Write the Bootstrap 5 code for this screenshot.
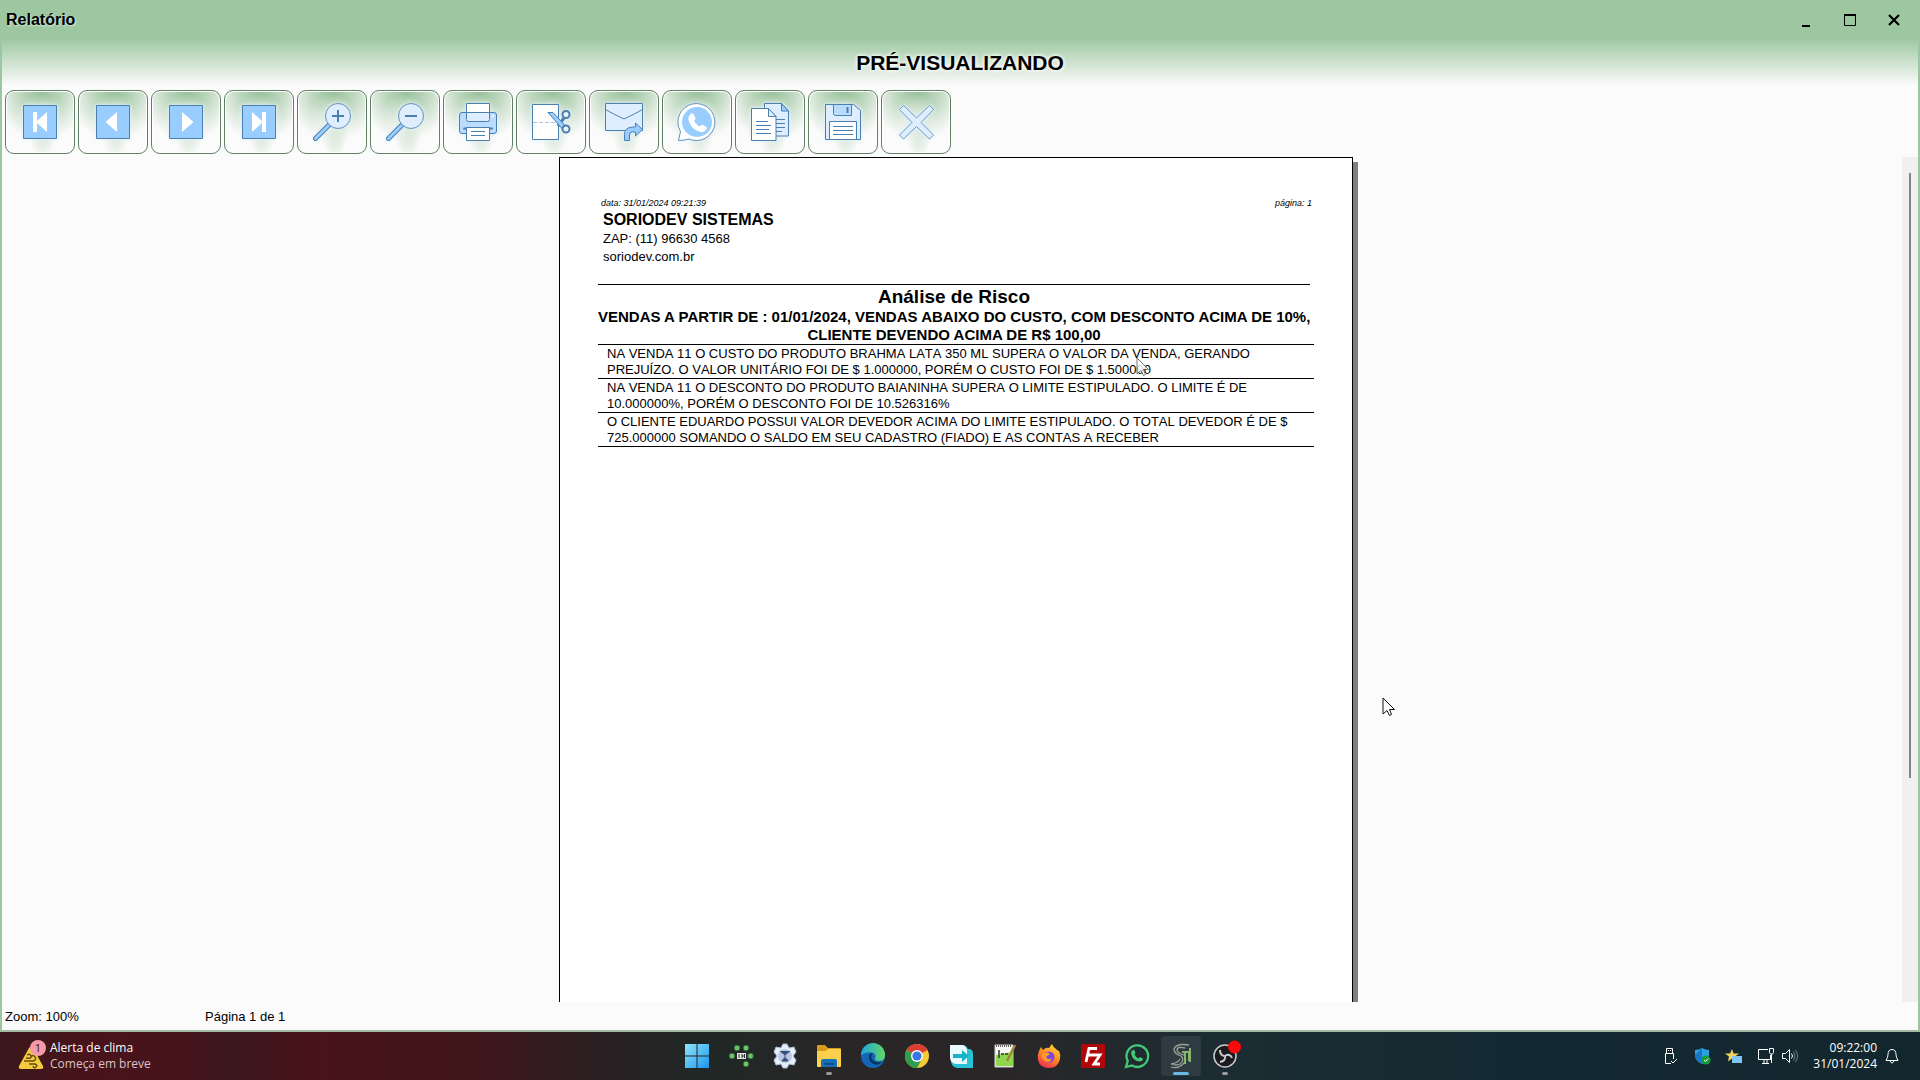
<!DOCTYPE html>
<html lang="pt-BR">
<head>
<meta charset="utf-8">
<meta name="viewport" content="width=device-width, initial-scale=1">
<title>Relatório</title>
<link href="https://cdn.jsdelivr.net/npm/bootstrap@5.3.0/dist/css/bootstrap.min.css" rel="stylesheet">
<style>
  body { font-family: "Liberation Sans", Arial, sans-serif; color: #000; background: #fbfbfb; }
  .app-window { border: 2px solid #9dc7a0; border-top: 0; border-bottom-color: #a3bba4; background: #fbfbfb linear-gradient(#9dc7a0 0, #9dc7a0 38px, #fbfbfb 86px) no-repeat; }
  .title-bar { height: 38px; padding-left: 4px; padding-right: 2px; }
  .title-name { font-size: 16px; line-height: 40px; font-weight: 700; text-shadow: 1px 1px 2px #dcebdc; }
  .win-btn { width: 44px; height: 38px; border: 0; background: none; padding: 0; }
  .preview-title { font-size: 21px; line-height: 50px; font-weight: 700; text-shadow: 0 0 4px #fff, 0 0 4px #fff; }
  .tool-strip { gap: 3px; padding: 2px 3px 3px; }
  .tool-btn { width: 70px; height: 64px; padding: 0; border: 1px solid #5f8062; border-radius: 9px; box-shadow: inset 0 0 0 1px #fff;
    background: radial-gradient(ellipse 26px 30px at 50% 52%, rgba(251,251,251,.5) 30%, rgba(251,251,251,0) 100%), radial-gradient(ellipse 14px 30px at 54% 60%, #bcd8bd, rgba(207,227,207,0)), radial-gradient(ellipse 46px 50px at 52% 0, #94c097 0, #bdd7be 45%, #fbfbfb 100%); }
  .tool-btn svg { width: 40px; height: 40px; display: block; margin: 0 auto; filter: drop-shadow(0 0 2px #e4f2ff); }
  .viewer { min-height: 0; }
  .canvas-area { padding-left: 8px; }
  .sheet { width: 794px; min-height: 1123px; background: #fff; border: 1px solid #000; box-shadow: 5px 5px 0 #808080; padding: 39px 38px 38px; }
  .sheet-meta { font-size: 9px; line-height: 13px; font-style: italic; padding: 0 2px 0 3px; }
  .company { padding-left: 5px; margin-bottom: 18px; font-size: 13px; line-height: 18px; }
  .company-name { font-size: 16px; line-height: 20px; font-weight: 700; margin: 0; }
  .report-head { border-top: 1px solid #000; margin-right: 4px; text-align: center; }
  .report-head h2 { font-size: 19px; line-height: 23px; font-weight: 700; margin: 0; }
  .report-head p { font-size: 15px; line-height: 18px; font-weight: 700; margin: 0; white-space: nowrap; }
  .risk-list { border-bottom: 1px solid #000; }
  .risk-list li { border-top: 1px solid #000; padding: 1px 0 0 9px; font-size: 13px; line-height: 16px; font-kerning: none; white-space: nowrap; }
  .scroll-track { width: 16px; background: #f0f0f0; padding: 16px 0 0 7px; }
  .scroll-thumb { width: 2px; height: 73%; background: #858585; }
  .status-strip { height: 28px; font-size: 13px; line-height: 30px; padding-left: 3px; }
  .status-zoom { width: 200px; }
  .task-strip { height: 48px; font-family: "Open Sans", "Noto Sans", sans-serif; font-size: 12px; line-height: 16px; color: #fff;
    background: linear-gradient(90deg, #3b181c 0, #49131b 90px, #47141c 180px, #3c181d 230px, #49131b 310px, #40171c 480px, #2a2023 600px, #202826 700px, #292627 850px, #2a2627 1000px, #1c2c32 1200px, #142a32 1500px, #12262e 100%); }
  .side-cell { flex: 1 1 0; }
  .weather { padding-left: 17px; gap: 3px; }
  .weather small { font-size: 12px; color: #d9c3c6; }
  .app-link { width: 44px; height: 48px; position: relative; }
  .app-link svg { width: 26px; height: 26px; overflow: visible; }
  .app-link.running::after { content: ""; position: absolute; bottom: 5px; left: 19px; width: 6px; height: 3px; border-radius: 2px; background: #9a9a9a; }
  .app-link.active::before { content: ""; position: absolute; inset: 4px 2px; border-radius: 4px; background: rgba(255,255,255,.08); }
  .app-link.active::after { left: 14px; width: 16px; background: #6cb9e6; }
  .tray { padding-right: 16px; }
  .tray-item { width: 32px; }
  .tray-item.slim { width: 16px; }
  .tray svg { width: 16px; height: 16px; overflow: visible; }
  .clock { width: 79px; }
  .bell { width: 24px; margin-left: 3px; }
  .pointer { position: absolute; width: 14px; height: 20px; }
  .pointer-main { left: 1382px; top: 697px; }
  .pointer-ghost { left: 1136px; top: 357px; opacity: .8; }
</style>
<script src="https://cdn.jsdelivr.net/npm/bootstrap@5.3.0/dist/js/bootstrap.bundle.min.js"></script>
</head>
<body class="vh-100 d-flex flex-column overflow-hidden position-relative">
<main class="app-window flex-grow-1 d-flex flex-column overflow-hidden">
  <header>
    <div class="title-bar d-flex justify-content-between">
      <span class="title-name">Relatório</span>
      <div class="d-flex">
        <button class="win-btn" aria-label="Minimizar"><svg width="14" height="14"><path d="M3 13h8" stroke="#000" stroke-width="2"/></svg></button>
        <button class="win-btn" aria-label="Maximizar"><svg width="14" height="14"><path d="M1.500 2.500h11v10h-11z" fill="none" stroke="#000"/><path d="M1 2h12" stroke="#000" stroke-width="2"/></svg></button>
        <button class="win-btn" aria-label="Fechar"><svg width="14" height="14"><path d="M2 2l10 10M12 2L2 12" stroke="#000" stroke-width="2.200"/></svg></button>
      </div>
    </div>
    <h1 class="preview-title text-center m-0">PRÉ-VISUALIZANDO</h1>
  </header>
  <nav class="tool-strip d-flex" aria-label="Ferramentas">
    <button class="tool-btn" aria-label="Primeira"><svg viewBox="0 0 40 40"><path d="M3.500 3.500h33v33h-33z" fill="#99ccff" stroke="#4a7fae"/><path d="M13 10h4v9l10-9v20l-10-9v9h-4z" fill="#fff"/></svg></button>
    <button class="tool-btn" aria-label="Anterior"><svg viewBox="0 0 40 40"><path d="M3.500 3.500h33v33h-33z" fill="#99ccff" stroke="#4a7fae"/><path d="M24 10v20L12.500 20z" fill="#fff"/></svg></button>
    <button class="tool-btn" aria-label="Próxima"><svg viewBox="0 0 40 40"><path d="M3.500 3.500h33v33h-33z" fill="#99ccff" stroke="#4a7fae"/><path d="M16 10v20l11.500-10z" fill="#fff"/></svg></button>
    <button class="tool-btn" aria-label="Última"><svg viewBox="0 0 40 40"><path d="M3.500 3.500h33v33h-33z" fill="#99ccff" stroke="#4a7fae"/><path d="M27 10h-4v9l-10-9v20l10-9v9h4z" fill="#fff"/></svg></button>
    <button class="tool-btn" aria-label="Aumentar zoom"><svg viewBox="0 0 40 40"><path d="M17.500 22.500L3.500 36.500" stroke="#4a7fae" stroke-width="5" stroke-linecap="round"/><path d="M17.500 22.500L3.500 36.500" stroke="#99ccff" stroke-width="3" stroke-linecap="round"/><circle cx="26" cy="14" r="12.500" fill="#deeeff" stroke="#6590b5"/><path d="M20 14h12M26 8v12" stroke="#4a7fae" stroke-width="2"/></svg></button>
    <button class="tool-btn" aria-label="Diminuir zoom"><svg viewBox="0 0 40 40"><path d="M17.500 22.500L3.500 36.500" stroke="#4a7fae" stroke-width="5" stroke-linecap="round"/><path d="M17.500 22.500L3.500 36.500" stroke="#99ccff" stroke-width="3" stroke-linecap="round"/><circle cx="26" cy="14" r="12.500" fill="#deeeff" stroke="#6590b5"/><path d="M20 14h12" stroke="#4a7fae" stroke-width="2"/></svg></button>
    <button class="tool-btn" aria-label="Imprimir"><svg viewBox="0 0 40 40" stroke="#4a7fae"><rect x="1.500" y="10.500" width="37" height="21" rx="2.500" fill="#b9dcff"/><path d="M8.500 1.500h23v15h-23z" fill="#fff"/><path d="M8.500 10.500h23v7q0 2-2 2h-19q-2 0-2-2z" fill="#deeeff"/><path d="M6 26.500h28" stroke-width="2" stroke-linecap="round"/><path d="M8.500 25.500h23v13h-23z" fill="#fff"/><path d="M13 29.500h14M13 33.500h14"/><circle cx="35" cy="14" r="1" fill="#fff" stroke="none"/></svg></button>
    <button class="tool-btn" aria-label="Recortar"><svg viewBox="0 0 40 40" stroke="#4a7fae" fill="none"><path d="M1.500 2.500h26v35h-26z" fill="#fff"/><path d="M2 20.500h26" stroke-dasharray="4 2" stroke="#a9c4d8"/><path d="M27 24l6-8" stroke-width="3"/><circle cx="35" cy="12.500" r="3.500" stroke-width="2" fill="#e8f4ff"/><path d="M17 10.500h5l12 13-3 3z" fill="#99ccff"/><circle cx="35" cy="27" r="3.500" stroke-width="2" fill="#e8f4ff"/></svg></button>
    <button class="tool-btn" aria-label="Enviar e-mail"><svg viewBox="0 0 40 40" stroke="#4a7fae"><path d="M1.500 1.500h37v27h-37z" fill="#deeeff"/><path d="M1.500 7.500q5 3 18.500 9.500 13.500-6.500 18.500-9.500" fill="none"/><path d="M20.500 38.500v-6q0-7 8-7.500h3v-4l7 6.500-7 6.500v-4h-3q-3 0-3 3v5.500z" fill="#99ccff"/></svg></button>
    <button class="tool-btn" aria-label="WhatsApp"><svg viewBox="0 0 40 40"><path d="M1.500 38.500l2-9A18.500 18.500 0 1 1 12 37q-5 1.500-10.500 1.500z" fill="#fff" stroke="#6590b5"/><circle cx="20" cy="20" r="15" fill="#99ccff"/><path d="M14 11.500q1.500-.8 2.500.5l2 4q.3 1-1.500 3 2 3.500 5.500 5.500 2-2 3-1.700l4 2.200q.8 1-.2 2.500-2 3-6 2.500-9-2-12-12.500 0-4 2.700-6z" fill="#fff"/></svg></button>
    <button class="tool-btn" aria-label="Copiar"><svg viewBox="0 0 40 40" stroke="#4a7fae"><path d="M14.500 1.500h17l7 7.500v25h-24z" fill="#deeeff"/><path d="M31.500 1.500V9h7z" fill="#99ccff"/><path d="M26 17.500h9M26 21.500h9M26 25.500h9M26 29.500h6"/><path d="M1.500 6.500h17l7.500 8v24H1.500z" fill="#fff"/><path d="M18.500 6.500v8H26z" fill="#deeeff"/><path d="M6 19.500h12M6 23.500h15M6 27.500h13M6 31.500h15"/></svg></button>
    <button class="tool-btn" aria-label="Salvar"><svg viewBox="0 0 40 40" stroke="#4a7fae"><path d="M2.500 2.500h28l7 6v29h-35z" fill="#deeeff"/><path d="M10.500 2.500h18v11h-16q-2 0-2-2z" fill="#b9dcff"/><path d="M24.500 5v6" stroke-width="2"/><path d="M6.500 19.500h27v18h-27z" fill="#fff"/><path d="M10 24.500h20M10 28.500h20M10 32.500h20"/></svg></button>
    <button class="tool-btn" aria-label="Fechar visualização"><svg viewBox="0 0 40 40"><path d="M7.500 3.500L20.500 16l13-12.500 4 4L25 20.500l12.500 12.500-4 4L20.500 24.500 7.500 37l-4-4L16 20.500 3.500 7.500z" fill="#deeeff" stroke="#6a9bc8" stroke-linejoin="round"/></svg></button>
  </nav>
  <section class="viewer flex-grow-1 d-flex">
    <div class="canvas-area flex-grow-1 d-flex justify-content-center align-items-start overflow-hidden">
      <article class="sheet">
        <div class="sheet-meta d-flex justify-content-between"><span>data: 31/01/2024 09:21:39</span><span>página: 1</span></div>
        <div class="company">
          <p class="company-name">SORIODEV SISTEMAS</p>
          <div>ZAP: (11) 96630 4568</div>
          <div>soriodev.com.br</div>
        </div>
        <div class="report-head">
          <h2>Análise de Risco</h2>
          <p>VENDAS A PARTIR DE : 01/01/2024, VENDAS ABAIXO DO CUSTO, COM DESCONTO ACIMA DE 10%,<br>CLIENTE DEVENDO ACIMA DE R$ 100,00</p>
        </div>
        <ul class="risk-list list-unstyled m-0">
          <li>NA VENDA 11 O CUSTO DO PRODUTO BRAHMA LATA 350 ML SUPERA O VALOR DA VENDA, GERANDO<br>PREJUÍZO. O VALOR UNITÁRIO FOI DE $ 1.000000, PORÉM O CUSTO FOI DE $ 1.500000</li>
          <li>NA VENDA 11 O DESCONTO DO PRODUTO BAIANINHA SUPERA O LIMITE ESTIPULADO. O LIMITE É DE<br>10.000000%, PORÉM O DESCONTO FOI DE 10.526316%</li>
          <li>O CLIENTE EDUARDO POSSUI VALOR DEVEDOR ACIMA DO LIMITE ESTIPULADO. O TOTAL DEVEDOR É DE $<br>725.000000 SOMANDO O SALDO EM SEU CADASTRO (FIADO) E AS CONTAS A RECEBER</li>
        </ul>
      </article>
    </div>
    <div class="scroll-track"><div class="scroll-thumb"></div></div>
  </section>
  <footer class="status-strip d-flex"><span class="status-zoom">Zoom: 100%</span><span>Página 1 de 1</span></footer>
</main>
<div class="task-strip d-flex flex-shrink-0">
  <div class="side-cell weather d-flex align-items-center">
    <svg width="30" height="34" viewBox="0 0 30 34"><path d="M12 9q2-3 4 0l10 18q1 3-2 3H4q-3 0-2-3z" fill="#f3cb3e"/><path d="M10 16q3-2 4 1t-5 2M7 22h9q4-1 2-4t-4 0M12 25h6q3 1 1 3t-3-1" fill="none" stroke="#6b4c10" stroke-width="1.500"/><circle cx="21" cy="9" r="8" fill="#f59aa6"/><text x="21" y="13" font-size="11" text-anchor="middle" fill="#3a1014">1</text></svg>
    <div>Alerta de clima<br><small>Começa em breve</small></div>
  </div>
  <nav class="d-flex" aria-label="Aplicativos">
    <a href="#" class="app-link d-flex align-items-center justify-content-center" aria-label="Iniciar"><svg viewBox="0 0 26 26"><defs><linearGradient id="wg" gradientUnits="userSpaceOnUse" x1="1" y1="1" x2="25" y2="25"><stop stop-color="#8ee6fb"/><stop offset="1" stop-color="#1c94ec"/></linearGradient></defs><path d="M1 1h11.500v11.500H1zM13.500 1H25v11.500H13.500zM1 13.500h11.500V25H1zM13.500 13.500H25V25H13.500z" fill="url(#wg)"/></svg></a>
    <a href="#" class="app-link d-flex align-items-center justify-content-center" aria-label="Rede"><svg viewBox="0 0 26 26"><g fill="#6fbf6f" stroke="#24562b"><circle cx="9" cy="5" r="3"/><circle cx="18" cy="5" r="3"/><circle cx="4" cy="13" r="3"/><circle cx="22.500" cy="13" r="3"/><circle cx="18" cy="21" r="3"/></g><path d="M9 10h9v6H9z" fill="#e5e5e5"/><path d="M11 11v4M13 12h2v2h-2M16.500 11v4" stroke="#333" fill="none"/></svg></a>
    <a href="#" class="app-link d-flex align-items-center justify-content-center" aria-label="Configuração"><svg viewBox="0 0 26 26"><path d="M11 1h4l2 4 5-1 2 5-3 4 3 4-2 5-5-1-2 4h-4l-2-4-5 1-2-5 3-4-3-4 2-5 5 1z" fill="#e6eefa" stroke="#a9bcd8"/><circle cx="13" cy="13" r="7" fill="#b6c9e4"/><path d="M8 8l5 4 5-4M10 18q3-6 6 0zM13 12v3" stroke="#42536f" fill="#2f4f7d"/></svg></a>
    <a href="#" class="app-link running d-flex align-items-center justify-content-center" aria-label="Explorador"><svg viewBox="0 0 26 26"><path d="M1 3q0-1 1-1h7l3 3h12q1 0 1 1v6H1z" fill="#d99a1c"/><path d="M1 8h9l2-2h12q1 0 1 1v16q0 1-1 1H2q-1 0-1-1z" fill="#fccf4d"/><path d="M5 24v-6q0-2 2-2h12q2 0 2 2v6z" fill="#1670b8"/><path d="M8 21h10" stroke="#0c4f8a" stroke-width="2"/></svg></a>
    <a href="#" class="app-link d-flex align-items-center justify-content-center" aria-label="Edge"><svg viewBox="0 0 26 26"><defs><linearGradient id="eg"><stop stop-color="#1ea4e0"/><stop offset="1" stop-color="#62d765"/></linearGradient></defs><circle cx="13" cy="13" r="12" fill="#1267b8"/><path d="M1 12A12 12 0 0 1 25 12q0 6-6 6-5 0-4-3 2-3-2-5-6-2-12 2z" fill="url(#eg)"/><path d="M9 14q0-4 4-4-3 3-1 6.500 3 4 10 2.500-5 5-10 1-3-2-3-6z" fill="#0b2f57"/></svg></a>
    <a href="#" class="app-link d-flex align-items-center justify-content-center" aria-label="Chrome"><svg viewBox="0 0 26 26"><circle cx="13" cy="13" r="12" fill="#f7c933"/><path d="M13 13L2.600 7A12 12 0 0 1 23.400 7z" fill="#dc3d32"/><path d="M2.600 7A12 12 0 0 0 13 25l5-9-5-3z" fill="#2e9d4c"/><circle cx="13" cy="13" r="6" fill="#fff"/><circle cx="13" cy="13" r="4.600" fill="#3578e5"/></svg></a>
    <a href="#" class="app-link d-flex align-items-center justify-content-center" aria-label="Transferência"><svg viewBox="0 0 26 26"><path d="M3 2h12q3 0 5 4h2q3 1 3 5v14H9q-5-1-6-6z" fill="#27c2d6"/><path d="M2 2h11q5 0 6 5v14H9q-6 0-7-6z" fill="#e9fbfd"/><path d="M5 11h9V7l7 6-7 6v-4H5z" fill="#19b3ca"/></svg></a>
    <a href="#" class="app-link d-flex align-items-center justify-content-center" aria-label="Notepad++"><svg viewBox="0 0 26 26"><path d="M3 2h18v22H3z" fill="#f5f7f2" stroke="#ccc"/><path d="M4 12l17-3v14H4z" fill="#8fd64e"/><path d="M4 3h16" stroke="#666" stroke-width="2" stroke-dasharray="1 1"/><path d="M7 7v8M9 11h3M13 11h3" stroke="#333" stroke-width="1.500"/><path d="M23 2L15 18" stroke="#a5843c" stroke-width="2.500"/></svg></a>
    <a href="#" class="app-link d-flex align-items-center justify-content-center" aria-label="Firefox"><svg viewBox="0 0 26 26"><defs><linearGradient id="ff" x1=".8" y1="0" x2=".3" y2="1"><stop stop-color="#ffde3e"/><stop offset=".5" stop-color="#ff8a22"/><stop offset="1" stop-color="#ed2f55"/></linearGradient></defs><path d="M3 8l2-4 2 3q3-3 6-2l3-4q1 3 4 5l1 1 2 1q2 4 1 8-2 9-11 9T2 17q-1-5 1-9z" fill="url(#ff)"/><circle cx="13" cy="14" r="5.500" fill="#7a46d8"/><path d="M6 11q5-3 8 0l-4 3q2 4 6 1-2 6-7 3-4-2-3-7z" fill="#ff9a2b"/></svg></a>
    <a href="#" class="app-link d-flex align-items-center justify-content-center" aria-label="FileZilla"><svg viewBox="0 0 26 26"><path d="M1 1h24v24H1z" fill="#b10609"/><path d="M6 19L9 5.500h8M7.500 12h7M14 12h6l-6 9h6" stroke="#fff" stroke-width="2.800" fill="none"/></svg></a>
    <a href="#" class="app-link d-flex align-items-center justify-content-center" aria-label="WhatsApp"><svg viewBox="0 0 26 26"><path d="M2 24l1.700-6A10.800 10.800 0 1 1 8 22.500z" fill="none" stroke="#43c878" stroke-width="2.300"/><path d="M9 7q1-.5 1.500.5l1 2.500-1 1.500q1.500 3 4 4l1.500-1.500 3 1.500q0 3-3.500 3Q8.500 18 7 10q0-2 2-3z" fill="#43c878"/></svg></a>
    <a href="#" class="app-link running active d-flex align-items-center justify-content-center" aria-label="Relatório"><svg viewBox="0 0 26 26" fill="none"><path d="M21 2Q8 0 6 6q0 5 7 7 4 4-1 8-4 2-8 0M17 5Q9 3 9 7q0 3 7 5 4 6-2 10-5 4-11 2M3 21q7-1 9-5" stroke="#929b94" stroke-width="1.300"/><path d="M14 9h7v9M17 9v12M22 5v14" stroke="#7fae62" stroke-width="2"/></svg></a>
    <a href="#" class="app-link running d-flex align-items-center justify-content-center" aria-label="OBS"><svg viewBox="0 0 26 26"><circle cx="13" cy="13" r="11" fill="#1b1a1f" stroke="#c9c9cc" stroke-width="1.500"/><path d="M13 13q-5 0-5-6M13 13q5-3 7 2M13 13q1 5-5 6" stroke="#c9c9cc" stroke-width="2" fill="none"/><circle cx="22.500" cy="4" r="6.500" fill="#f60a0a"/></svg></a>
  </nav>
  <div class="side-cell tray d-flex align-items-center justify-content-end">
    <span class="tray-item text-center"><svg viewBox="0 0 16 16" fill="none" stroke="#fff"><path d="M4.500 5V.500h6V5M9 15.500H3.500V5.500h8V11M6.500 2v1M8.500 2v1M9 13l2 2 4-4"/></svg></span>
    <span class="tray-item text-center"><svg viewBox="0 0 16 16"><path d="M8 0q3 2 7 2v5q0 6-7 9-7-3-7-9V2q4 0 7-2z" fill="#2f9fe3"/><path d="M8 0v16q-7-3-7-9z" fill="#1777c4"/><circle cx="12" cy="12" r="4.500" fill="#159a3c"/><path d="M10 12l1.500 1.500L14 10.500" stroke="#fff" fill="none"/></svg></span>
    <span class="tray-item text-center"><svg viewBox="0 0 16 16"><path d="M6 1l1.500 4.500H13L9 8.500l1 5-4-3-4 3 1-5-4-3h5z" fill="#f4d35a"/><path d="M6 8h10v7H6z" fill="#80c4f5"/></svg></span>
    <span class="tray-item text-center"><svg viewBox="0 0 16 16" fill="none" stroke="#fff"><path d="M10 1.500H.500v10h12V7M4 15.500h7M6 12v3M9 12v3M11.500.500h4v4l-1 1.500h-2l-1-1.500zM13.500 6v9"/></svg></span>
    <span class="tray-item slim text-center"><svg viewBox="0 0 16 16" fill="none" stroke="#fff"><path d="M.500 5.500h3l4-4v13l-4-4h-3z"/><path d="M9.500 5.500q2 2.500 0 5"/><path d="M11.500 3.500q3 4.500 0 9M13.500 2q4 6 0 12" stroke="#6f7f84"/></svg></span>
    <div class="clock text-end">09:22:00<br>31/01/2024</div>
    <span class="bell text-center"><svg viewBox="0 0 16 16" fill="none" stroke="#fff"><path d="M2 12.500q2-3 2-6 0-5 4-5t4 5q0 3 2 6zM6 13q2 4 4 0"/></svg></span>
  </div>
</div>
<svg class="pointer pointer-main" viewBox="0 0 14 20"><path d="M1 1v16l4-3.500 2.500 5 2-1-2-5h5z" fill="#fff" stroke="#111"/></svg>
<svg class="pointer pointer-ghost" viewBox="0 0 14 20"><path d="M1 1v16l4-3.500 2.500 5 2-1-2-5h5z" fill="#fff" stroke="#555"/></svg>
</body>
</html>
